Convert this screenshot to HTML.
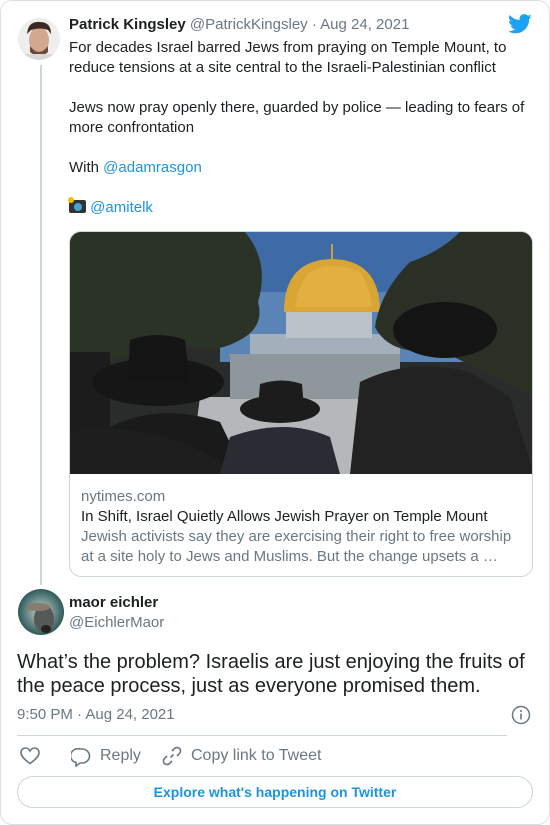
<!DOCTYPE html>
<html><head><meta charset="utf-8"><style>
*{margin:0;padding:0;box-sizing:border-box}
body{width:550px;height:825px;background:#fff;font-family:"Liberation Sans",Arial,sans-serif;color:#1c2022;position:relative;overflow:hidden}
.card{position:absolute;left:0;top:0;width:550px;height:825px;border:1px solid #dbe0e4;border-radius:12px}
.a{position:absolute;white-space:nowrap}
.t{font-size:15px;line-height:20px}
.g{color:#697882}
.b{color:#1b95e0}
</style></head><body>
<div class="card"></div>
<svg class="a" style="left:18px;top:18px" width="42" height="42" viewBox="0 0 42 42">
<defs><clipPath id="c1"><circle cx="21" cy="21" r="21"/></clipPath></defs>
<g clip-path="url(#c1)"><rect width="42" height="42" fill="#eeeeec"/>
<ellipse cx="21" cy="22" rx="10" ry="13" fill="#d2a88e"/>
<path d="M9 16 Q10 3 22 4 Q33 4 33 16 L30 12 Q22 9 13 12Z" fill="#3a2a22"/>
<path d="M12 28 Q21 40 30 28 L30 34 Q21 42 12 34Z" fill="#6b4a38"/>
<rect x="6" y="36" width="30" height="8" fill="#d8d8d6"/></g></svg>
<div class="a" style="left:40px;top:65px;width:2px;height:520px;background:#ccd6dd"></div>
<div class="a t" style="left:69px;top:15px"><b>Patrick Kingsley</b> <span class="g">@PatrickKingsley · Aug 24, 2021</span></div>
<svg class="a" style="left:508px;top:14px" width="24" height="20" viewBox="0 0 24 20"><path fill="#1da1f2" d="M23.6 2.4c-.9.4-1.8.6-2.8.8 1-.6 1.800-1.5 2.1-2.7-.9.6-2 1-3.1 1.2C19 .7 17.7.1 16.3.1c-2.7 0-4.8 2.2-4.8 4.8 0 .4 0 .8.1 1.1C7.5 5.8 4 3.9 1.6 1 1.2 1.7 1 2.5 1 3.4c0 1.7.9 3.2 2.2 4-.8 0-1.5-.2-2.2-.6v.1c0 2.3 1.7 4.3 3.9 4.7-.4.1-.8.2-1.3.2-.3 0-.6 0-.9-.1.6 1.9 2.400 3.3 4.5 3.4-1.700 1.3-3.7 2.1-6 2.1-.4 0-.8 0-1.2-.1 2.1 1.4 4.7 2.2 7.4 2.2 8.9 0 13.7-7.4 13.7-13.7v-.6c1-.7 1.8-1.5 2.5-2.600z"/></svg>
<div class="a t" style="left:69px;top:38px">For decades Israel barred Jews from praying on Temple Mount, to<br>reduce tensions at a site central to the Israeli-Palestinian conflict</div>
<div class="a t" style="left:69px;top:98px">Jews now pray openly there, guarded by police — leading to fears of<br>more confrontation</div>
<div class="a t" style="left:69px;top:158px">With <span class="b">@adamrasgon</span></div>
<div class="a t" style="left:69px;top:198px"><span style="display:inline-block;width:17px;height:13px;background:#333;border-radius:2px;vertical-align:-1px;position:relative"><span style="position:absolute;left:5px;top:3px;width:8px;height:8px;border-radius:50%;background:#4aa3d8"></span><span style="position:absolute;left:-1px;top:-3px;width:6px;height:6px;border-radius:50%;background:#f5c000"></span></span> <span class="b">@amitelk</span></div>
<div class="a" style="left:69px;top:231px;width:464px;height:346px;border:1px solid #ccd6dd;border-radius:12px;overflow:hidden">
<svg width="464" height="242" viewBox="0 0 464 242" style="display:block">
<rect width="464" height="242" fill="#2a2c2c"/>
<rect x="150" y="0" width="250" height="130" fill="#3e6aa6"/>
<rect x="150" y="60" width="250" height="70" fill="#5a84b6"/>
<rect x="180" y="102" width="150" height="68" fill="#a3b0bc"/>
<rect x="216" y="78" width="86" height="28" fill="#b9c2c8"/>
<path d="M214 80 Q214 28 262 27 Q310 28 310 80Z" fill="#d9a634"/>
<path d="M240 40 Q262 28 290 40 Q300 55 302 75 L225 75 Q228 52 240 40Z" fill="#e6b84a" opacity=".6"/>
<rect x="261" y="12" width="2" height="16" fill="#c9a040"/>
<path d="M130 165 L330 165 L340 242 L120 242Z" fill="#b4b8ba"/>
<rect x="160" y="122" width="170" height="45" fill="#8e979c"/>
<path d="M0 0 L175 0 Q200 30 188 70 Q195 95 170 108 Q140 125 110 110 L0 140Z" fill="#2b3226"/>
<path d="M464 0 L390 0 Q370 20 340 30 Q310 60 305 95 Q320 125 370 118 L464 165Z" fill="#2a3025"/>
<rect x="0" y="120" width="40" height="122" fill="#1c1c1c"/>
<ellipse cx="88" cy="150" rx="66" ry="24" fill="#161616"/>
<path d="M60 108 Q88 98 115 108 L120 150 L58 150Z" fill="#141414"/>
<path d="M20 242 L40 195 Q90 170 150 190 L175 242Z" fill="#1a1a1a"/>
<path d="M0 242 L0 200 Q90 185 170 242Z" fill="#1e1e1e"/>
<ellipse cx="210" cy="177" rx="40" ry="14" fill="#1c1c1c"/>
<path d="M190 152 Q212 145 232 152 L234 177 L188 177Z" fill="#1c1c1c"/>
<path d="M150 242 L160 205 Q215 185 260 205 L270 242Z" fill="#2b2b33"/>
<ellipse cx="375" cy="98" rx="52" ry="28" fill="#141414"/>
<path d="M345 80 Q375 65 400 80 L405 98 L342 98Z" fill="#151515"/>
<path d="M280 242 L290 150 Q340 125 400 140 L440 165 L464 242Z" fill="#232222"/>
</svg>
<div class="a t g" style="left:11px;top:255px">nytimes.com</div>
<div class="a t" style="left:11px;top:275px">In Shift, Israel Quietly Allows Jewish Prayer on Temple Mount</div>
<div class="a t g" style="left:11px;top:295px">Jewish activists say they are exercising their right to free worship<br>at a site holy to Jews and Muslims. But the change upsets a …</div>
</div>
<svg class="a" style="left:18px;top:589px" width="46" height="46" viewBox="0 0 46 46">
<defs><clipPath id="c2"><circle cx="23" cy="23" r="23"/></clipPath><radialGradient id="rg"><stop offset="0" stop-color="#c8d6d0"/><stop offset="1" stop-color="#2e5a5a"/></radialGradient></defs>
<g clip-path="url(#c2)"><rect width="46" height="46" fill="url(#rg)"/>
<ellipse cx="26" cy="30" rx="10" ry="14" fill="#555a58"/>
<ellipse cx="20" cy="18" rx="12" ry="4" fill="#8a7a70"/>
<ellipse cx="28" cy="40" rx="5" ry="4" fill="#222"/></g></svg>
<div class="a t" style="left:69px;top:593px;font-weight:bold">maor eichler</div>
<div class="a t g" style="left:69px;top:613px">@EichlerMaor</div>
<div class="a" style="left:17px;top:650px;font-size:20px;line-height:24px">What’s the problem? Israelis are just enjoying the fruits of<br>the peace process, just as everyone promised them.</div>
<div class="a t g" style="left:17px;top:705px">9:50 PM · Aug 24, 2021</div>
<svg class="a" style="left:511px;top:705px" width="20" height="20" viewBox="0 0 20 20"><circle cx="10" cy="10" r="8.5" fill="none" stroke="#697882" stroke-width="1.5"/><rect x="9.2" y="8.5" width="1.6" height="6" fill="#697882"/><circle cx="10" cy="6" r="1" fill="#697882"/></svg>
<div class="a" style="left:17px;top:735px;width:490px;height:1px;background:#ccd6dd"></div>
<svg class="a" style="left:20px;top:747px" width="20" height="18" viewBox="0 0 20 18"><path d="M10 16.5 C3 11.5 1 8.5 1 5.5 1 3 3 1 5.5 1 7.5 1 9 2.2 10 4 11 2.2 12.5 1 14.5 1 17 1 19 3 19 5.5 19 8.5 17 11.5 10 16.5Z" fill="none" stroke="#697882" stroke-width="1.6"/></svg>
<svg class="a" style="left:71px;top:747px" width="20" height="20" viewBox="0 0 20 20"><path d="M9 2 H11 A7.5 7 0 0 1 11 16 H9 L5 19 V15.5 A7.5 7 0 0 1 9 2Z" fill="none" stroke="#697882" stroke-width="1.6"/></svg>
<div class="a t g" style="left:100px;top:746px;font-size:16px">Reply</div>
<svg class="a" style="left:162px;top:746px" width="20" height="20" viewBox="0 0 20 20"><g fill="none" stroke="#697882" stroke-width="1.6"><path d="M8.5 11.5 L11.5 8.5"/><path d="M10 5 L12.5 2.5 A3 3 0 0 1 17.5 7.5 L15 10"/><path d="M10 15 L7.5 17.5 A3 3 0 0 1 2.5 12.5 L5 10"/></g></svg>
<div class="a t g" style="left:191px;top:746px;font-size:16px">Copy link to Tweet</div>
<div class="a" style="left:17px;top:776px;width:516px;height:32px;border:1px solid #ccd6dd;border-radius:16px;text-align:center;font-size:14px;line-height:30px;font-weight:bold;color:#1b95e0">Explore what's happening on Twitter</div>
</body></html>
